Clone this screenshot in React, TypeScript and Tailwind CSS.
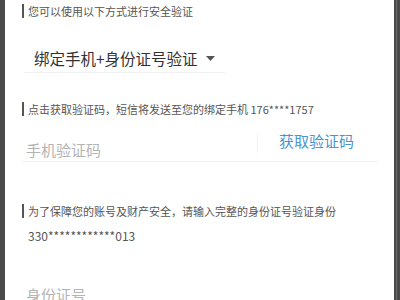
const font = { fontFamily: '"Noto Sans CJK SC", "Noto Sans", sans-serif' };

function Label({ text }: { text: string }) {
  return (
    <div className="flex h-[16px] items-center pl-[22px]">
      <span className="h-[14px] w-[2px] bg-[#555555]" />
      <span className="ml-[4px] text-[11px] leading-[16px] text-[#555555]">{text}</span>
    </div>
  );
}

export default function App() {
  return (
    <div className="flex h-[300px] w-[400px] overflow-hidden bg-white" style={font}>
      <div className="w-[5px] bg-[#4a4a4a]" />
      <div className="flex-1 bg-white">
        <div className="mt-[3px] -ml-[5px]">
          <Label text="您可以使用以下方式进行安全验证" />
        </div>

        <div className="ml-[19px] mt-[25px] flex h-[29px] w-[201px] items-center justify-between border-b border-[#f0f0f0] pl-[10px] pr-[10px]">
          <span className="text-[15.5px] leading-[20px] text-[#333333]">绑定手机+身份证号验证</span>
          <svg width="9" height="5" viewBox="0 0 9 5">
            <path d="M0 0h9L4.5 5z" fill="#555555" />
          </svg>
        </div>

        <div className="mt-[28px] -ml-[5px]">
          <Label text="点击获取验证码，短信将发送至您的绑定手机 176****1757" />
        </div>

        <div className="ml-[17px] mt-[10px] flex h-[35px] w-[356px] border-b border-[#f0f0f0]">
          <div className="flex flex-1 items-end pb-[1px] pl-[4px]">
            <span className="text-[15px] leading-[20px] text-[#b4b4b4]">手机验证码</span>
          </div>
          <div className="flex w-[121px] items-start">
            <span className="mt-[6px] h-[20px] w-px bg-[#f2f2f2]" />
            <span className="ml-[21px] mt-[4px] text-[15px] leading-[20px] text-[#4b95cf]">获取验证码</span>
          </div>
        </div>

        <div className="mt-[41px] -ml-[5px]">
          <Label text="为了保障您的账号及财产安全，请输入完整的身份证号验证身份" />
        </div>
        <div className="ml-[23px] mt-[9px] h-[16px] text-[12px] leading-[16px] text-[#555555]">
          330************013
        </div>

        <div className="ml-[21px] mt-[41px] text-[15px] leading-[20px] text-[#b4b4b4]">身份证号</div>
      </div>
      <div className="flex w-[6px] bg-[#4a4a4a]">
        <span className="ml-[2px] w-px bg-[#6a6a6a]" />
      </div>
    </div>
  );
}
